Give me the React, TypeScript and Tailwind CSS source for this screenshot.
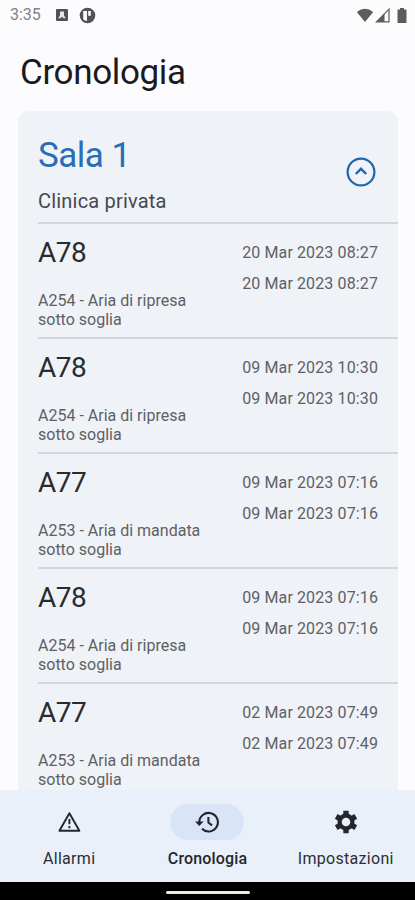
type Evento = {
  codice: string;
  descrizione: string;
  inizio: string;
  fine: string;
};

const eventi: Evento[] = [
  { codice: "A78", descrizione: "A254 - Aria di ripresa sotto soglia", inizio: "20 Mar 2023 08:27", fine: "20 Mar 2023 08:27" },
  { codice: "A78", descrizione: "A254 - Aria di ripresa sotto soglia", inizio: "09 Mar 2023 10:30", fine: "09 Mar 2023 10:30" },
  { codice: "A77", descrizione: "A253 - Aria di mandata sotto soglia", inizio: "09 Mar 2023 07:16", fine: "09 Mar 2023 07:16" },
  { codice: "A78", descrizione: "A254 - Aria di ripresa sotto soglia", inizio: "09 Mar 2023 07:16", fine: "09 Mar 2023 07:16" },
  { codice: "A77", descrizione: "A253 - Aria di mandata sotto soglia", inizio: "02 Mar 2023 07:49", fine: "02 Mar 2023 07:49" },
];

const AlertIcon = () => (
  <svg width="26" height="26" viewBox="0 0 26 26" fill="none" stroke="currentColor" strokeWidth="1.9" strokeLinejoin="round">
    <path d="M13.4 4.2 23.4 21.8H3.4Z" />
    <path d="M13.4 10v5.2M13.4 17v2.2" />
  </svg>
);

const HistoryIcon = () => (
  <svg width="26" height="26" viewBox="0 0 26 26" fill="none" stroke="currentColor" strokeWidth="2.1">
    <path d="M5.3 13.5A9.3 9.3 0 1 1 8 19.8" />
    <path d="M14.4 8V13.6L18 16.4" />
    <path d="M1 12.6H9.6L5.3 17Z" fill="currentColor" stroke="none" />
  </svg>
);

const GearIcon = () => (
  <svg width="26" height="26" viewBox="0 0 26 26" stroke="currentColor" fill="none">
    <circle cx="13" cy="13" r="6.4" strokeWidth="4.2" />
    {[0, 60, 120].map((deg) => (
      <path key={deg} d="M13 1.7V5.6M13 20.4V24.3" strokeWidth="5.4" transform={`rotate(${deg} 13 13)`} />
    ))}
  </svg>
);

const tabs = [
  { label: "Allarmi", Icon: AlertIcon, active: false },
  { label: "Cronologia", Icon: HistoryIcon, active: true },
  { label: "Impostazioni", Icon: GearIcon, active: false },
];

const StatusBar = () => (
  <div className="flex h-[30px] shrink-0 items-center pl-[10px] pr-[8px] text-[#5c5c5c]">
    <span className="w-[46px] text-[16px] leading-[30px] text-[#828285]">3:35</span>
    <svg width="12" height="12" viewBox="0 0 12 12">
      <rect width="12" height="12" rx="1" fill="#525254" />
      <path d="M4 2.5H8V6.5L9.8 9.2H7.6L6 7.8 4.4 9.2H2.2L4 6.5Z" fill="#e6e6e8" />
    </svg>
    <svg className="ml-[11px]" width="17" height="17" viewBox="0 0 17 17">
      <circle cx="8.5" cy="8.5" r="7.8" fill="#525254" />
      <path d="M4.2 4H8v9.8H6.5A6 6 0 0 1 4.2 12Z" fill="#fcfcfe" />
      <path d="M9.2 4h2.6v4.8H9.2Z" fill="#fcfcfe" />
    </svg>
    <svg className="ml-auto" width="18" height="15" viewBox="0 0 18 15">
      <path d="M.8 4Q9-2.4 17.2 4L9 14Z" fill="#5c5c5c" />
    </svg>
    <svg className="ml-px" width="16" height="15" viewBox="0 0 16 15">
      <path d="M14 1.2V13.8H1.5Z" fill="none" stroke="#5c5c5c" strokeWidth="1.2" />
      <path d="M9.5 5.5V14H1Z" fill="#5c5c5c" />
    </svg>
    <svg className="ml-[6px]" width="10" height="15" viewBox="0 0 10 15">
      <path d="M3 0h4v1.5h2.5V15H.5V1.5H3Z" fill="#5c5c5c" />
    </svg>
  </div>
);

const EventoRow = ({ evento }: { evento: Evento }) => (
  <li className="flex h-[115px] justify-between border-t-2 border-[#d2d5da] pr-[20px]">
    <div className="w-[175px]">
      <p className="mt-[12px] text-[28px] leading-[34px] tracking-[-0.5px] text-[#2a2b2e]">{evento.codice}</p>
      <p className="mt-[21px] text-[16px] leading-[19px] text-[#5e6064]">{evento.descrizione}</p>
    </div>
    <div className="mt-[13px] whitespace-nowrap text-right text-[16px] leading-[31px] tracking-[0.12px] text-[#5e6064]">
      <p>{evento.inizio}</p>
      <p>{evento.fine}</p>
    </div>
  </li>
);

const BottomNav = () => (
  <nav className="flex h-[92px] shrink-0 justify-around bg-[#eaf0f9] pt-[14px]">
    {tabs.map(({ label, Icon, active }) => (
      <div key={label} className="flex w-1/3 flex-col items-center text-[#24262b]">
        <div className={active ? "flex h-[36px] w-[74px] items-center justify-center rounded-full bg-[#dae4f9]" : "flex h-[36px] w-[74px] items-center justify-center"}>
          <Icon />
        </div>
        <span className={active ? "mt-[9px] text-[16px] font-medium leading-[20px] tracking-[0.15px]" : "mt-[9px] text-[16px] leading-[20px] tracking-[0.3px] text-[#2c2e33]"}>{label}</span>
      </div>
    ))}
  </nav>
);

const App = () => {
  return (
    <div className="flex h-[900px] w-[415px] flex-col overflow-hidden bg-[#fcfcfe] font-['Roboto',sans-serif]">
      <StatusBar />
      <h1 className="ml-[20px] mt-[22px] text-[35px] leading-[42px] tracking-[-0.35px] text-[#1a1a1c]">Cronologia</h1>
      <main className="mt-[17px] min-h-0 flex-1 overflow-hidden">
        <section className="ml-[18px] mr-[17px] rounded-t-[11px] bg-[#eff3f8] pl-[20px]">
          <header className="flex h-[111px] justify-between pr-[22px]">
            <div>
              <h2 className="mt-[24px] text-[35px] leading-[42px] tracking-[-0.5px] text-[#2a6db4]">Sala 1</h2>
              <p className="mt-[12px] text-[20px] leading-[24px] tracking-[0.2px] text-[#46484c]">Clinica privata</p>
            </div>
            <svg className="mt-[46px]" width="30" height="30" viewBox="0 0 30 30" fill="none" stroke="#1f65b0">
              <circle cx="15" cy="15" r="13.4" strokeWidth="2.2" />
              <path d="M9.8 17 15 11.8 20.2 17" strokeWidth="2.4" />
            </svg>
          </header>
          <ul>
            {eventi.map((evento, i) => (
              <EventoRow key={i} evento={evento} />
            ))}
          </ul>
        </section>
      </main>
      <BottomNav />
      <div className="flex h-[18px] shrink-0 justify-center bg-black pt-[9px]">
        <div className="h-[3px] w-[84px] rounded-full bg-[#ececec]" />
      </div>
    </div>
  );
};

export default App;
